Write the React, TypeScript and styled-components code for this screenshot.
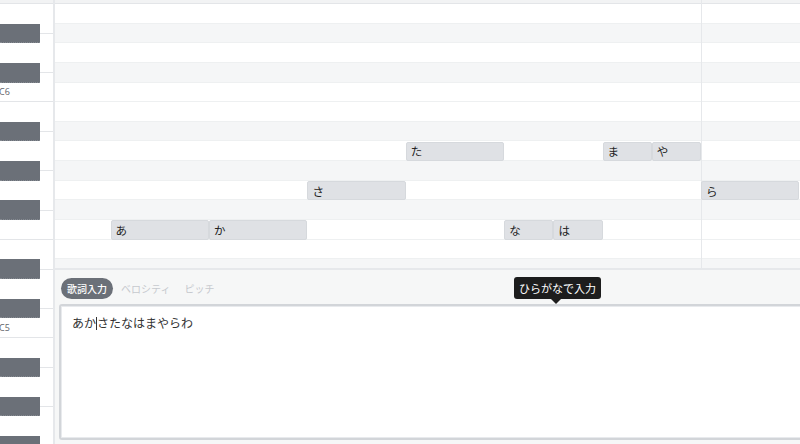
import React from "react";
import styled, { createGlobalStyle } from "styled-components";

const ROW_H = 19.65;
const TOP = 4;
const BEAT = 98.4;
const ORIGIN = 55.6;
const FONT = `"Noto Sans CJK JP", "Noto Sans", sans-serif`;

const GlobalStyle = createGlobalStyle`
  html, body { margin: 0; padding: 0; background: #fff; }
  body { font-family: ${FONT}; }
`;

const NAMES = ["C", "C#", "D", "D#", "E", "F", "F#", "G", "G#", "A", "A#", "B"];
// E6 (88) down to F#4 (66)
const pitches = Array.from({ length: 23 }, (_, i) => 88 - i);
const isBlack = (p: number) => NAMES[p % 12].includes("#");
const name = (p: number) => NAMES[p % 12] + (Math.floor(p / 12) - 1);

const notes = [
  { text: "あ", pitch: 77, start: 0, len: 1 },
  { text: "か", pitch: 77, start: 1, len: 1 },
  { text: "さ", pitch: 79, start: 2, len: 1 },
  { text: "た", pitch: 81, start: 3, len: 1 },
  { text: "な", pitch: 77, start: 4, len: 0.5 },
  { text: "は", pitch: 77, start: 4.5, len: 0.5 },
  { text: "ま", pitch: 81, start: 5, len: 0.5 },
  { text: "や", pitch: 81, start: 5.5, len: 0.5 },
  { text: "ら", pitch: 79, start: 6, len: 1 },
];

const Screen = styled.div`
  display: flex;
  width: 800px;
  height: 444px;
  overflow: hidden;
  background: #fff;
`;

const Keyboard = styled.div`
  width: 53px;
  flex: none;
  border-right: 2px solid #e6e8eb;
  overflow: hidden;
`;

const TopStrip = styled.div`
  height: ${TOP}px;
  box-sizing: border-box;
  background: #f2f3f4;
  border-bottom: 1px solid #e3e5e8;
`;

const KeyRow = styled.div<{ $line: boolean }>`
  position: relative;
  display: flex;
  align-items: center;
  height: ${ROW_H}px;
  box-sizing: border-box;
  border-bottom: ${(p) => (p.$line ? "1px solid #e3e5e8" : "none")};
`;

const BlackKey = styled.div`
  width: 40px;
  height: 100%;
  background: #6b7078;
  border-bottom: 1px dotted #858a91;
  box-sizing: border-box;
`;

const KeyLine = styled.div`
  flex: 1;
  height: 1px;
  background: #e3e5e8;
`;

const KeyLabel = styled.span`
  font-family: "Open Sans", "Noto Sans", sans-serif;
  font-size: 9px;
  color: #5f646b;
  margin-left: -1px;
`;

const Main = styled.div`
  flex: 1;
  display: flex;
  flex-direction: column;
  min-width: 0;
  overflow: hidden;
`;

const Grid = styled.div`
  position: relative;
  height: 268px;
  flex: none;
  overflow: hidden;
`;

const GridRow = styled.div<{ $black: boolean }>`
  height: ${ROW_H}px;
  box-sizing: border-box;
  background: ${(p) => (p.$black ? "#f5f6f7" : "#fff")};
  border-bottom: 1px solid #eef0f1;
`;

const BarLine = styled.div`
  position: absolute;
  top: 0;
  bottom: 0;
  width: 1px;
  background: #e6e8eb;
`;

const Note = styled.div`
  position: absolute;
  height: ${ROW_H}px;
  box-sizing: border-box;
  display: flex;
  align-items: center;
  padding-left: 4px;
  background: #dfe1e5;
  border: 1px solid #d6d9dd;
  border-radius: 2px;
  font-size: 11.5px;
  color: #222;
`;

const Panel = styled.div`
  position: relative;
  flex: 1;
  background: #f6f7f7;
  border-top: 2px solid #e6e8eb;
  padding: 8px 0 4px 4px;
  display: flex;
  flex-direction: column;
  gap: 5px;
`;

const Tabs = styled.div`
  display: flex;
  align-items: center;
  gap: 2px;
  padding-left: 2px;
`;

const Tab = styled.div<{ $active?: boolean }>`
  height: 21px;
  line-height: 21px;
  padding: 0 6px;
  border-radius: 11px;
  font-size: 10px;
  font-weight: ${(p) => (p.$active ? 500 : 400)};
  color: ${(p) => (p.$active ? "#fff" : "#c6c9ce")};
  background: ${(p) => (p.$active ? "#6b7078" : "transparent")};
`;

const Editor = styled.div`
  flex: 1;
  margin-right: -12px;
  background: #fff;
  border: 2px solid #d2d5d9;
  border-radius: 3px;
  box-shadow: inset 0 0 0 1px #e8eaed;
  padding: 8px 11px;
  font-size: 12px;
  line-height: 18px;
  color: #333;
`;

const Caret = styled.span`
  display: inline-block;
  width: 1px;
  height: 13px;
  background: #333;
  vertical-align: -2px;
`;

const Tooltip = styled.div`
  position: absolute;
  left: 459px;
  top: 7px;
  height: 22px;
  line-height: 22px;
  padding: 0 5px;
  background: #1d1d1d;
  border-radius: 3px;
  color: #fff;
  font-size: 11px;
  &::after {
    content: "";
    position: absolute;
    left: 37px;
    bottom: -5px;
    border-left: 5px solid transparent;
    border-right: 5px solid transparent;
    border-top: 5px solid #1d1d1d;
  }
`;

export default function App() {
  const rowTop = (p: number) => TOP + (88 - p) * ROW_H;
  return (
    <>
      <GlobalStyle />
      <Screen>
        <Keyboard>
          <TopStrip />
          {pitches.map((p) => {
            const n = NAMES[p % 12];
            return (
              <KeyRow key={p} $line={n === "C" || n === "F"}>
                {isBlack(p) ? (
                  <>
                    <BlackKey />
                    <KeyLine />
                  </>
                ) : n === "C" ? (
                  <KeyLabel>{name(p)}</KeyLabel>
                ) : null}
              </KeyRow>
            );
          })}
        </Keyboard>
        <Main>
          <Grid>
            <TopStrip />
            {pitches.map((p) => (
              <GridRow key={p} $black={isBlack(p)} />
            ))}
            <BarLine style={{ left: ORIGIN + 6 * BEAT }} />
            {notes.map((n, i) => (
              <Note
                key={i}
                style={{
                  left: ORIGIN + n.start * BEAT,
                  width: n.len * BEAT,
                  top: rowTop(n.pitch),
                }}
              >
                {n.text}
              </Note>
            ))}
          </Grid>
          <Panel>
            <Tabs>
              <Tab $active>歌詞入力</Tab>
              <Tab>ベロシティ</Tab>
              <Tab>ピッチ</Tab>
            </Tabs>
            <Editor>
              あか<Caret />さたなはまやらわ
            </Editor>
            <Tooltip>ひらがなで入力</Tooltip>
          </Panel>
        </Main>
      </Screen>
    </>
  );
}
